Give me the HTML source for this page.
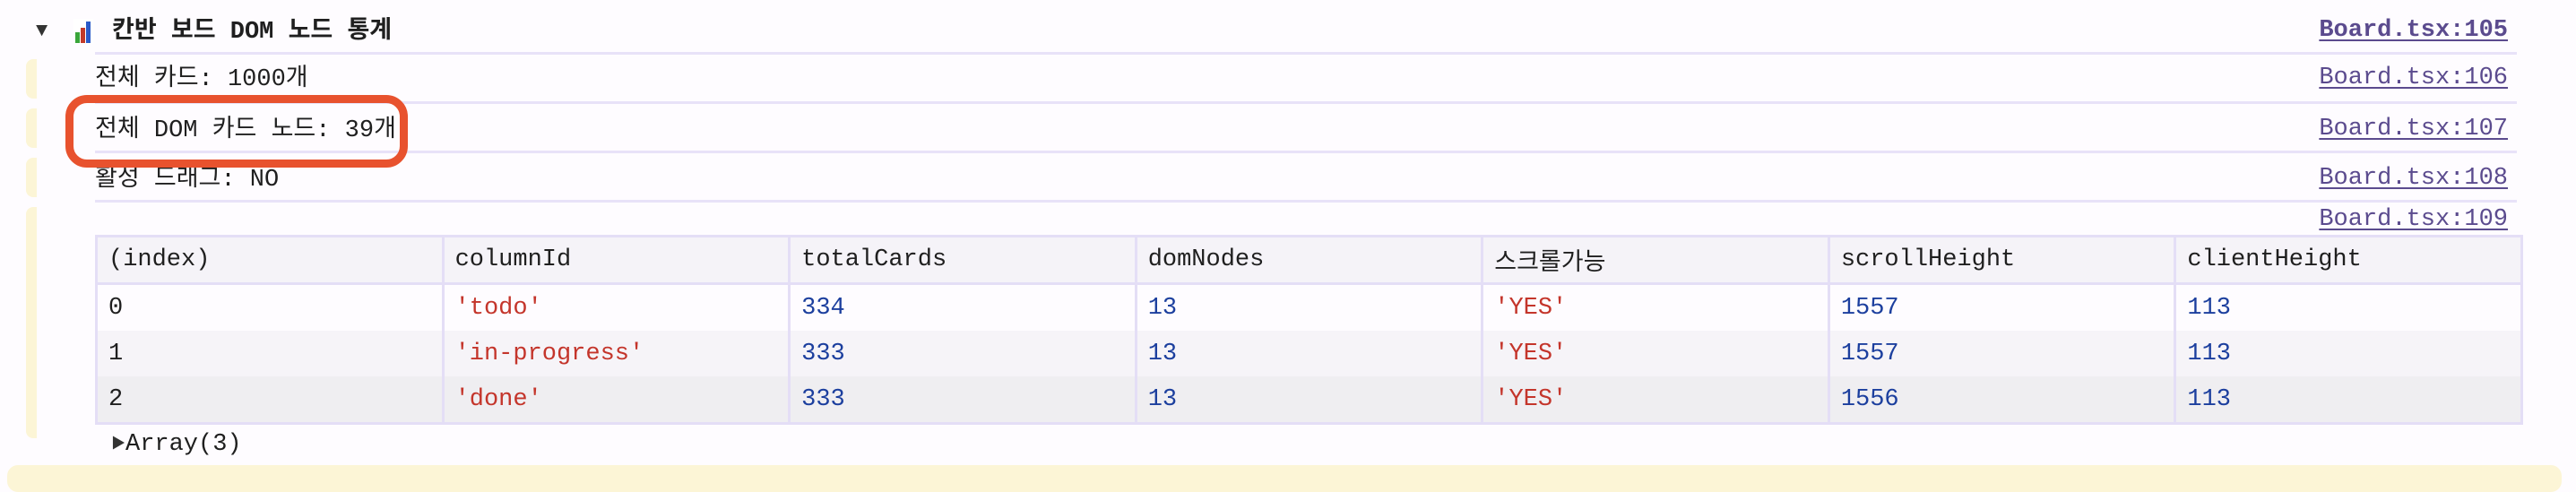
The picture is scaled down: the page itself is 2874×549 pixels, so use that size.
<!DOCTYPE html>
<html><head><meta charset="utf-8"><style>
html,body{margin:0;padding:0}
body{width:2874px;height:536px;background:#fefcff;position:relative;overflow:hidden;font-family:"Liberation Mono","Noto Sans CJK KR",monospace;font-size:27px;color:#1f1f1f}
.a{position:absolute;white-space:pre;line-height:32px}
.sep{position:absolute;left:106px;width:2702px;height:3px;background:#e8e2f8}
.lnk{position:absolute;right:76px;color:#5b4b8e;text-decoration:underline;text-decoration-thickness:2px;text-underline-offset:4px;line-height:32px}
.ys{position:absolute;left:29px;width:12px;background:#fcf5d6;border-radius:8px 0 0 8px}
table{position:absolute;left:106px;top:262px;width:2709px;border-collapse:collapse;table-layout:fixed}
td{border-left:3px solid #e4def6;border-right:3px solid #e4def6;padding:0 0 0 12px;height:51px;font-size:27px;white-space:pre}
tr:first-child td{background:#f5f3f8;border-top:3px solid #e4def6;border-bottom:3px solid #e4def6;height:50px}
tr:nth-child(2) td{background:#fefcff}
tr:nth-child(3) td{background:#f6f4f8}
tr:nth-child(4) td{background:#efeef1;border-bottom:3px solid #e4def6}
.s{color:#c4352b}.n{color:#1c3f9e}
</style></head><body>
<div class="a" style="left:40px;top:19px;font-size:22px;color:#333">▼</div>
<svg style="position:absolute;left:82px;top:21px" width="22" height="28" viewBox="0 0 22 28"><rect x="0" y="0" width="22" height="28" fill="#fff"/><rect x="2" y="15" width="5" height="12" fill="#3aa53a"/><rect x="8" y="10" width="5" height="17" fill="#c23a2a"/><rect x="14" y="3" width="5" height="24" fill="#2a5ac8"/></svg>
<div class="a" style="left:125px;top:20px;font-weight:bold">칸반 보드 DOM 노드 통계</div>
<div class="lnk" style="top:18px;font-weight:bold">Board.tsx:105</div>
<div class="sep" style="top:58px"></div>
<div class="ys" style="top:66px;height:44px"></div>
<div class="a" style="left:106px;top:73px">전체 카드: 1000개</div>
<div class="lnk" style="top:71px">Board.tsx:106</div>
<div class="sep" style="top:113px"></div>
<div class="ys" style="top:121px;height:44px"></div>
<div class="a" style="left:106px;top:130px">전체 DOM 카드 노드: 39개</div>
<div class="lnk" style="top:128px">Board.tsx:107</div>
<div class="sep" style="top:168px"></div>
<div class="ys" style="top:176px;height:44px"></div>
<div class="a" style="left:106px;top:185px">활성 드래그: NO</div>
<div class="lnk" style="top:183px">Board.tsx:108</div>
<div class="sep" style="top:223px"></div>
<div class="ys" style="top:231px;height:258px"></div>
<div class="lnk" style="top:229px">Board.tsx:109</div>
<table>
<tr><td>(index)</td><td>columnId</td><td>totalCards</td><td>domNodes</td><td>스크롤가능</td><td>scrollHeight</td><td>clientHeight</td></tr>
<tr><td>0</td><td class="s">'todo'</td><td class="n">334</td><td class="n">13</td><td class="s">'YES'</td><td class="n">1557</td><td class="n">113</td></tr>
<tr><td>1</td><td class="s">'in-progress'</td><td class="n">333</td><td class="n">13</td><td class="s">'YES'</td><td class="n">1557</td><td class="n">113</td></tr>
<tr><td>2</td><td class="s">'done'</td><td class="n">333</td><td class="n">13</td><td class="s">'YES'</td><td class="n">1556</td><td class="n">113</td></tr>
</table>
<div class="a" style="left:124px;top:480px;font-size:16px;color:#333">▶</div>
<div class="a" style="left:140px;top:480px">Array(3)</div>
<div style="position:absolute;left:8px;top:519px;width:2850px;height:30px;background:#fcf5d6;border-radius:12px"></div>
<div style="position:absolute;left:73px;top:106px;width:364px;height:63px;border:9px solid #e8522e;border-radius:24px"></div>
</body></html>
